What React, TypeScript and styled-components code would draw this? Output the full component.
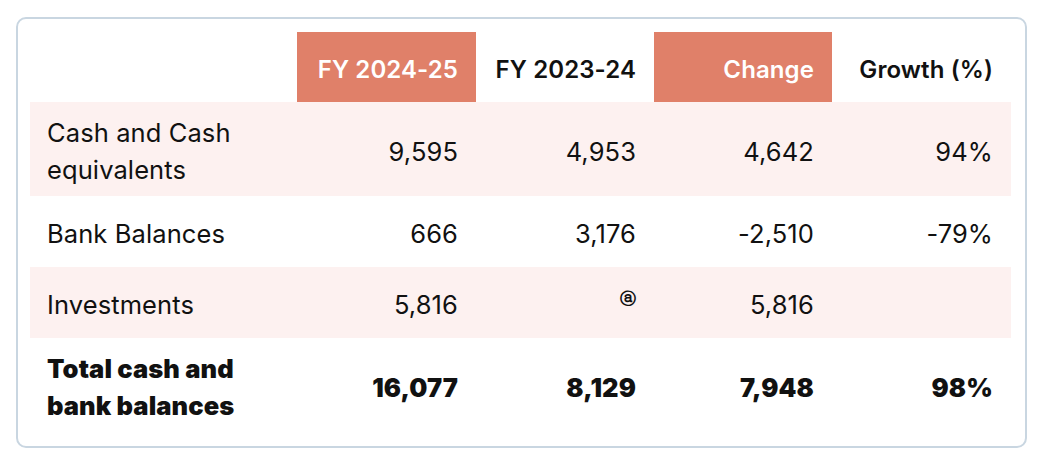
import React from "react";
import styled, { createGlobalStyle } from "styled-components";

const GlobalStyle = createGlobalStyle`
  body {
    margin: 0;
    background: #ffffff;
    font-family: Inter, "Noto Sans", sans-serif;
    color: #111111;
  }
`;

const Page = styled.div`
  padding: 17px 0 0 16px;
`;

const Card = styled.div`
  width: 1011px;
  box-sizing: border-box;
  border: 2px solid #c9d6e1;
  border-radius: 10px;
  padding: 13px 14px 14px 12px;
`;

const COLUMNS = "267px 179px 178px 178px 179px";

type RowProps = {
  $shaded?: boolean;
  $header?: boolean;
};

const Row = styled.div<RowProps>`
  display: grid;
  grid-template-columns: ${COLUMNS};
  background: ${(props) => (props.$shaded ? "#fdf1f0" : "transparent")};
  min-height: ${(props) => (props.$header ? "70px" : "71px")};
`;

type CellProps = {
  $accent?: boolean;
  $label?: boolean;
  $bold?: boolean;
  $header?: boolean;
};

const Cell = styled.div<CellProps>`
  display: flex;
  align-items: center;
  justify-content: ${(props) => (props.$label ? "flex-start" : "flex-end")};
  padding: ${(props) => (props.$label ? "0 10px 0 17px" : "0 18px 0 10px")};
  padding-top: ${(props) => (props.$header ? "11px" : "12px")};
  padding-bottom: ${(props) => (props.$header ? "7px" : "8px")};
  font-size: ${(props) => (props.$header ? "24px" : "25.5px")};
  line-height: 37px;
  letter-spacing: 0.1px;
  font-weight: ${(props) => (props.$bold ? 900 : props.$header ? 600 : 400)};
  background: ${(props) => (props.$accent ? "#e08069" : "transparent")};
  color: ${(props) => (props.$accent ? "#ffffff" : "#111111")};
`;

const Note = styled.span`
  font-family: "DejaVu Sans", sans-serif;
  font-size: 16px;
  font-weight: 700;
  line-height: 1;
  position: relative;
  top: -6px;
`;

type DataRow = {
  label: React.ReactNode;
  values: React.ReactNode[];
  bold?: boolean;
};

const rows: DataRow[] = [
  { label: <>Cash and Cash<br />equivalents</>, values: ["9,595", "4,953", "4,642", "94%"] },
  { label: "Bank Balances", values: ["666", "3,176", "-2,510", "-79%"] },
  { label: "Investments", values: ["5,816", <Note>ⓐ</Note>, "5,816", ""] },
  {
    label: <>Total cash and<br />bank balances</>,
    values: ["16,077", "8,129", "7,948", "98%"],
    bold: true,
  },
];

const headers = [
  { text: "FY 2024-25", accent: true },
  { text: "FY 2023-24", accent: false },
  { text: "Change", accent: true },
  { text: "Growth (%)", accent: false },
];

export default function App() {
  return (
    <>
      <GlobalStyle />
      <Page>
        <Card>
          <Row $header>
            <Cell $label $header />
            {headers.map((h) => (
              <Cell key={h.text} $header $accent={h.accent}>
                {h.text}
              </Cell>
            ))}
          </Row>
          {rows.map((row, i) => (
            <Row key={i} $shaded={i % 2 === 0 && !row.bold}>
              <Cell $label $bold={row.bold}>
                <span>{row.label}</span>
              </Cell>
              {row.values.map((v, j) => (
                <Cell key={j} $bold={row.bold}>
                  {v}
                </Cell>
              ))}
            </Row>
          ))}
        </Card>
      </Page>
    </>
  );
}
